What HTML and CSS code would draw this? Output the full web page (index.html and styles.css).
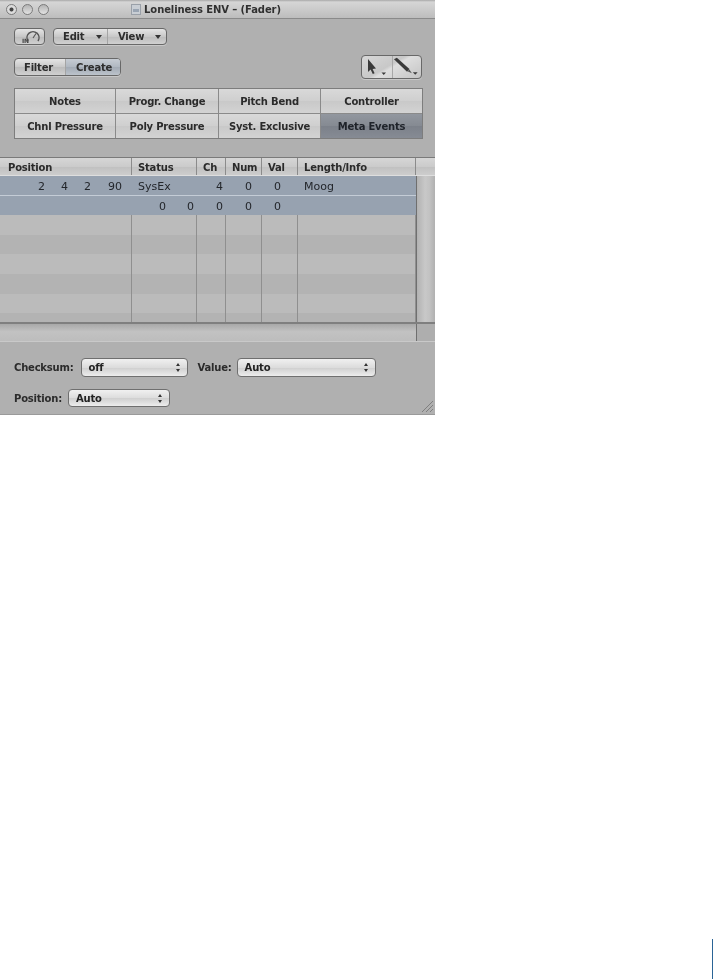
FILE: index.html
```html
<!DOCTYPE html>
<html lang="en">
<head>
<meta charset="utf-8">
<title>Loneliness ENV - (Fader)</title>
<link rel="stylesheet" href="styles.css">
</head>
<body>
<div class="page">
  <div class="window">
    <header class="titlebar">
      <div class="lights"><span class="light light-active"></span><span class="light"></span><span class="light"></span></div>
      <div class="title"><svg class="doc" width="10" height="11" viewBox="0 0 10 11"><rect x="0.5" y="0.5" width="9" height="10" fill="#c9ced4" stroke="#9aa0a8"/><rect x="2" y="5" width="6" height="3" fill="#9aa5b3"/></svg>Loneliness ENV – (Fader)</div>
    </header>

    <div class="controls">
      <div class="row row-one">
        <div class="btn btn-in">
          <svg width="24" height="15" viewBox="0 0 24 15"><path d="M10 12A6 6 0 1 1 20 12" fill="none" stroke="#555" stroke-width="1.5"/><path d="M15 9L18 4.5" stroke="#555" stroke-width="1.1"/><text x="4" y="14" class="in-label">IN</text></svg>
        </div>
        <div class="btn-group group-menu">
          <div class="btn-seg seg-edit">Edit<span class="caret"></span></div>
          <div class="btn-seg seg-view">View<span class="caret"></span></div>
        </div>
      </div>

      <div class="row row-two">
        <div class="btn-group group-mode">
          <div class="btn-seg seg-filter">Filter</div>
          <div class="btn-seg seg-create">Create</div>
        </div>
        <div class="btn-group group-tools">
          <div class="btn-seg seg-tool">
            <svg width="30" height="22" viewBox="0 0 30 22"><path d="M6 3L6 16L8.600 13.500L10.800 18L12.600 17.200L10.600 13L14 12.600Z" fill="#3a3a3a"/><path d="M19.500 16.500H24L21.750 19Z" fill="#3a3a3a"/></svg>
          </div>
          <div class="btn-seg seg-tool">
            <svg width="30" height="22" viewBox="0 0 30 22"><path d="M1 3L4 1.500L17 13L14.500 16Z" fill="#3a3a3a"/><path d="M15 15.500L17 13.500L19.500 17.500Z" fill="#555"/><path d="M20.500 16.500H25.500L23 19Z" fill="#3a3a3a"/></svg>
          </div>
        </div>
      </div>

      <div class="event-grid">
        <div class="event">Notes</div>
        <div class="event">Progr. Change</div>
        <div class="event">Pitch Bend</div>
        <div class="event">Controller</div>
        <div class="event">Chnl Pressure</div>
        <div class="event">Poly Pressure</div>
        <div class="event">Syst. Exclusive</div>
        <div class="event event-on">Meta Events</div>
      </div>
    </div>

    <div class="table">
      <div class="thead cols">
        <div class="th">Position</div>
        <div class="th">Status</div>
        <div class="th">Ch</div>
        <div class="th">Num</div>
        <div class="th">Val</div>
        <div class="th">Length/Info</div>
        <div class="th th-corner"></div>
      </div>
      <div class="tbody-wrap">
        <div class="tbody">
          <div class="tr tr-sel cols">
            <div class="td td-pos"><span>2</span><span>4</span><span>2</span><span>90</span></div>
            <div class="td td-left">SysEx</div>
            <div class="td td-ch">4</div>
            <div class="td td-num">0</div>
            <div class="td td-val">0</div>
            <div class="td td-left">Moog</div>
          </div>
          <div class="tr tr-sel cols">
            <div class="td"></div>
            <div class="td td-pair"><span>0</span><span>0</span></div>
            <div class="td td-ch">0</div>
            <div class="td td-num">0</div>
            <div class="td td-val">0</div>
            <div class="td"></div>
          </div>
          <div class="tr tr-a cols"><div class="td"></div><div class="td"></div><div class="td"></div><div class="td"></div><div class="td"></div><div class="td"></div></div>
          <div class="tr tr-b cols"><div class="td"></div><div class="td"></div><div class="td"></div><div class="td"></div><div class="td"></div><div class="td"></div></div>
          <div class="tr tr-a cols"><div class="td"></div><div class="td"></div><div class="td"></div><div class="td"></div><div class="td"></div><div class="td"></div></div>
          <div class="tr tr-b cols"><div class="td"></div><div class="td"></div><div class="td"></div><div class="td"></div><div class="td"></div><div class="td"></div></div>
          <div class="tr tr-a cols"><div class="td"></div><div class="td"></div><div class="td"></div><div class="td"></div><div class="td"></div><div class="td"></div></div>
          <div class="tr tr-b cols"><div class="td"></div><div class="td"></div><div class="td"></div><div class="td"></div><div class="td"></div><div class="td"></div></div>
        </div>
        <div class="vscroll"></div>
      </div>
      <div class="hscroll"><div class="hscroll-track"></div><div class="hscroll-corner"></div></div>
    </div>

    <div class="footer">
      <div class="field-row field-row-one">
        <label class="label label-checksum">Checksum:</label>
        <div class="select select-checksum">off<span class="updown"></span></div>
        <label class="label label-value">Value:</label>
        <div class="select select-value">Auto<span class="updown"></span></div>
      </div>
      <div class="field-row field-row-two">
        <label class="label">Position:</label>
        <div class="select select-position">Auto<span class="updown"></span></div>
      </div>
      <svg class="grip" width="14" height="14" viewBox="0 0 14 14"><path d="M2 13L13 2M6 13L13 6M10 13L13 10" stroke="#7f7f7f" stroke-width="1"/></svg>
    </div>
  </div>
  <div class="margin-rule"></div>
</div>
</body>
</html>
```

FILE: styles.css
```css
* { box-sizing: border-box; }
html, body { margin: 0; padding: 0; background: #fff; }
.page { position: relative; width: 713px; height: 979px; overflow: hidden; }

.window {
  width: 435px;
  height: 415px;
  background: #b0b0b0;
  font-family: "DejaVu Sans", sans-serif;
  font-size: 10px;
  letter-spacing: -0.2px;
  color: #222;
  display: flex;
  flex-direction: column;
  border-bottom: 1px solid #9a9a9a;
  filter: blur(0.4px);
}

/* title bar */
.titlebar {
  height: 19px;
  flex: none;
  display: flex;
  align-items: center;
  justify-content: center;
  position: relative;
  background: linear-gradient(#a8a8a8 0, #d6d6d6 2px, #bdbdbd);
  border-bottom: 1px solid #8a8a8a;
}
.lights { position: absolute; left: 6px; top: 4px; display: flex; gap: 5px; }
.light {
  width: 11px; height: 11px; border-radius: 50%;
  border: 1px solid #7b7b7b;
  background: linear-gradient(#b4b4b4, #e2e2e2);
}
.light-active { background: radial-gradient(circle, #444 0 1.6px, #dcdcdc 2.4px); }
.title { font-weight: 700; font-size: 10px; color: #303030; display: flex; align-items: center; gap: 3px; letter-spacing: -0.1px; padding-right: 23px; }

/* controls */
.controls { padding: 9px 12px 0 14px; height: 138px; flex: none; }
.row { display: flex; align-items: center; }
.row-one { height: 17px; gap: 8px; }
.row-two { margin-top: 10px; height: 24px; justify-content: space-between; padding-right: 1px; }

.btn, .btn-group {
  border: 1px solid #686868;
  border-radius: 4px;
  background: linear-gradient(#e4e4e4, #c8c8c8 50%, #bcbcbc 52%, #d0d0d0);
  box-shadow: 0 1px 0 #c8c8c8;
  font-weight: 700;
  color: #2d2d2d;
}
.btn { width: 31px; height: 17px; display: flex; align-items: center; justify-content: center; }
.btn-group { display: flex; }
.btn-seg { display: flex; align-items: center; }
.group-menu { height: 17px; width: 114px; }
.seg-edit { width: 54px; padding-left: 9px; border-right: 1px solid #a4a4a4; }
.seg-view { flex: 1; padding-left: 10px; }
.caret {
  margin-left: auto; margin-right: 5px;
  width: 0; height: 0;
  border-left: 3.5px solid transparent;
  border-right: 3.5px solid transparent;
  border-top: 4px solid #333;
}
.group-mode { width: 107px; height: 18px; align-self: flex-start; margin-top: 3px; }
.seg-filter { width: 50px; padding-left: 9px; }
.seg-create {
  flex: 1; padding-left: 10px;
  background: linear-gradient(#c6ccd3, #b0b8c1 50%, #a3abb5 52%, #bcc3cb);
  border-radius: 0 3px 3px 0;
  border-left: 1px solid #a4a4a4;
}
.group-tools {
  width: 61px; height: 24px;
  background: linear-gradient(150deg, #d8d8d8, #c8c8c8 45%, #dedede 52%, #c4c4c4);
}
.seg-tool { width: 30px; height: 22px; }
.seg-tool + .seg-tool { border-left: 1px solid #a8a8a8; }
.in-label { font: 700 6px "DejaVu Sans", sans-serif; fill: #444; }

/* event grid */
.event-grid {
  margin-top: 9px;
  width: 409px;
  height: 51px;
  display: grid;
  grid-template-columns: 101px 103px 102px 101px;
  grid-template-rows: 25px 24px;
  border: 1px solid #7d7d7d;
  background: #7d7d7d;
}
.event {
  display: flex; align-items: center; justify-content: center;
  font-weight: 700;
  color: #2b2b2b;
  background: linear-gradient(#d9d9d9, #cfcfcf 50%, #c9c9c9 52%, #d3d3d3);
  border-right: 1px solid #8a8a8a;
  border-bottom: 1px solid #8a8a8a;
}
.event:nth-child(4n) { border-right: 0; }
.event:nth-child(n+5) { border-bottom: 0; }
.event-on { background: linear-gradient(#92979f, #858a92 50%, #7c818a 52%, #868b94); color: #1f232a; }

/* table */
.table { flex: none; display: flex; flex-direction: column; }
.cols { display: grid; grid-template-columns: 132px 65px 29px 36px 36px 118px; }
.thead {
  grid-template-columns: 132px 65px 29px 36px 36px 118px 19px;
  height: 19px;
  border-top: 1px solid #7a7a7a;
  border-bottom: 1px solid #dedede;
  background: linear-gradient(#d6d6d6, #cbcbcb 50%, #c0c0c0 52%, #cdcdcd);
}
.th { padding: 3px 0 0 6px; font-weight: 700; border-right: 1px solid #8b8b8b; color: #2a2a2a; line-height: 14px; }
.th:first-child { padding-left: 8px; }
.th-corner { border-right: 0; }

.tbody-wrap { display: flex; height: 148px; overflow: hidden; border-bottom: 2px solid #7f7f7f; }
.tbody { width: 416px; flex: none; }
.tr { height: 19.6px; }
.td { border-right: 1px solid #8f8f8f; height: 100%; font-size: 11px; letter-spacing: 0; line-height: 21px; color: #23262b; }
.tr-sel { background: #97a2b0; }
.tr-sel:first-child { border-bottom: 1px solid #c4ccd6; }
.tr-sel .td { border-right-color: transparent; }
.tr-a { background: #bbbbbb; }
.tr-b { background: #b3b3b3; }
.td-pos { display: grid; grid-template-columns: 45px 23px 23px 31px; text-align: right; }
.td-left { padding-left: 6px; }
.td-ch { text-align: right; padding-right: 2px; }
.td-num { text-align: right; padding-right: 9px; }
.td-val { text-align: right; padding-right: 16px; }
.td-pair { display: grid; grid-template-columns: 34px 28px; text-align: right; }

.vscroll {
  flex: 1;
  border-left: 1px solid #6f6f6f;
  background: linear-gradient(90deg, #b2b2b2, #c8c8c8 45%, #c2c2c2 70%, #b0b0b0);
}
.hscroll { height: 18px; display: flex; border-bottom: 1px solid #c9c9c9; }
.hscroll-track { width: 416px; background: linear-gradient(#a8a8a8, #c2c2c2 45%, #bdbdbd); }
.hscroll-corner { flex: 1; background: #aeaeae; border-left: 1px solid #6f6f6f; }

/* footer */
.footer { position: relative; flex: 1; padding: 16px 0 0 14px; }
.field-row { display: flex; align-items: center; }
.field-row-one { height: 19px; }
.field-row-two { height: 18px; margin-top: 12px; }
.label { font-weight: 700; color: #2b2b2b; margin-right: 6px; }
.label-checksum { margin-right: 7px; }
.label-value { margin-left: 10px; margin-right: 5px; }
.select {
  height: 100%;
  border: 1px solid #6f6f6f;
  border-radius: 4px;
  background: linear-gradient(#f0f0f0, #dcdcdc 50%, #cfcfcf 52%, #ededed);
  font-weight: 700;
  color: #222;
  padding-left: 7px;
  display: flex;
  align-items: center;
  position: relative;
}
.select-checksum { width: 107px; }
.select-value { width: 139px; }
.select-position { width: 102px; }
.updown {
  position: absolute; right: 7px; top: 4px;
  width: 0; height: 0;
  border-left: 2px solid transparent;
  border-right: 2px solid transparent;
  border-bottom: 3px solid #333;
}
.updown::after {
  content: "";
  position: absolute; left: -2px; top: 6px;
  width: 0; height: 0;
  border-left: 2px solid transparent;
  border-right: 2px solid transparent;
  border-top: 3px solid #333;
}
.grip { position: absolute; right: 1px; bottom: 1px; }

.margin-rule { position: absolute; left: 712px; top: 939px; width: 1px; height: 40px; background: #2a6496; }
```
